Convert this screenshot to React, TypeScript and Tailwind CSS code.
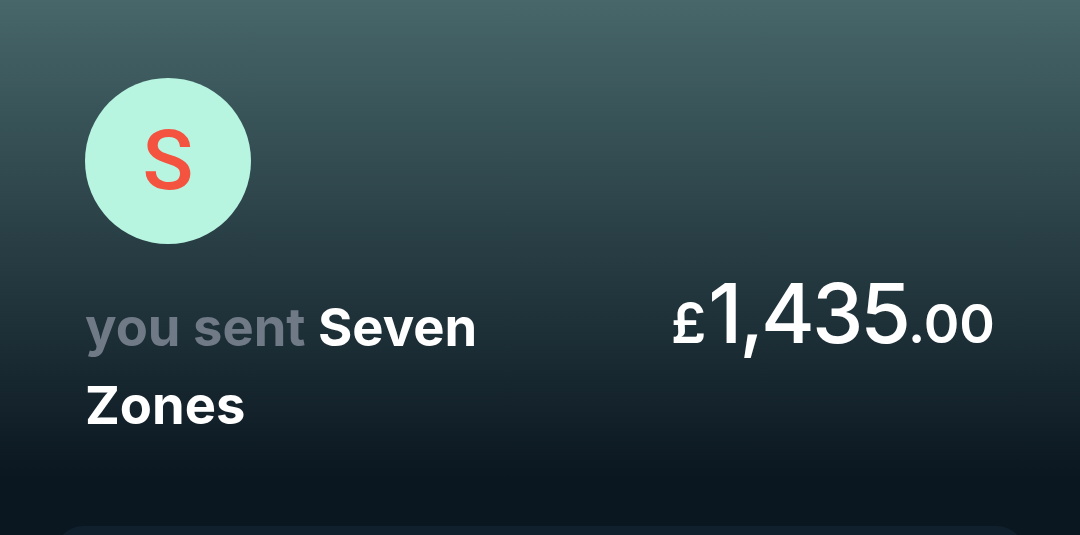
import React from "react";

export default function App() {
  return (
    <div
      className="relative w-[1080px] h-[535px] overflow-hidden bg-[#0a1620] bg-[linear-gradient(180deg,#47676a_0px,#0a1620_480px)]"
      style={{ fontFamily: "Inter, 'Noto Sans', sans-serif" }}
    >
      <div className="flex justify-between pl-[85px] pr-[85px] pt-[78px]">
        <div className="flex flex-col">
          <div className="w-[166px] h-[166px] rounded-full bg-[#b8f5e1] flex items-center justify-center">
            <span
              className="text-[#f4533f] text-[84px] leading-none font-medium"
              style={{ fontFamily: "Roboto, sans-serif" }}
            >
              S
            </span>
          </div>
          <div className="mt-[44px] w-[470px] text-[52.5px] leading-[78px] font-bold text-white">
            <span className="text-[#6f7a86]">you sent</span> Seven Zones
          </div>
        </div>
        <div className="mt-[174px] flex items-baseline text-white h-[78px]">
          <span className="text-[56px] font-semibold mr-[2px]">£</span>
          <span className="text-[82px] font-medium tracking-[-3px]">1,435</span>
          <span className="text-[54px] font-semibold">.00</span>
        </div>
      </div>
      <div className="absolute left-[55px] right-[55px] top-[526px] h-[40px] rounded-t-[28px] bg-[#10202c]" />
    </div>
  );
}
